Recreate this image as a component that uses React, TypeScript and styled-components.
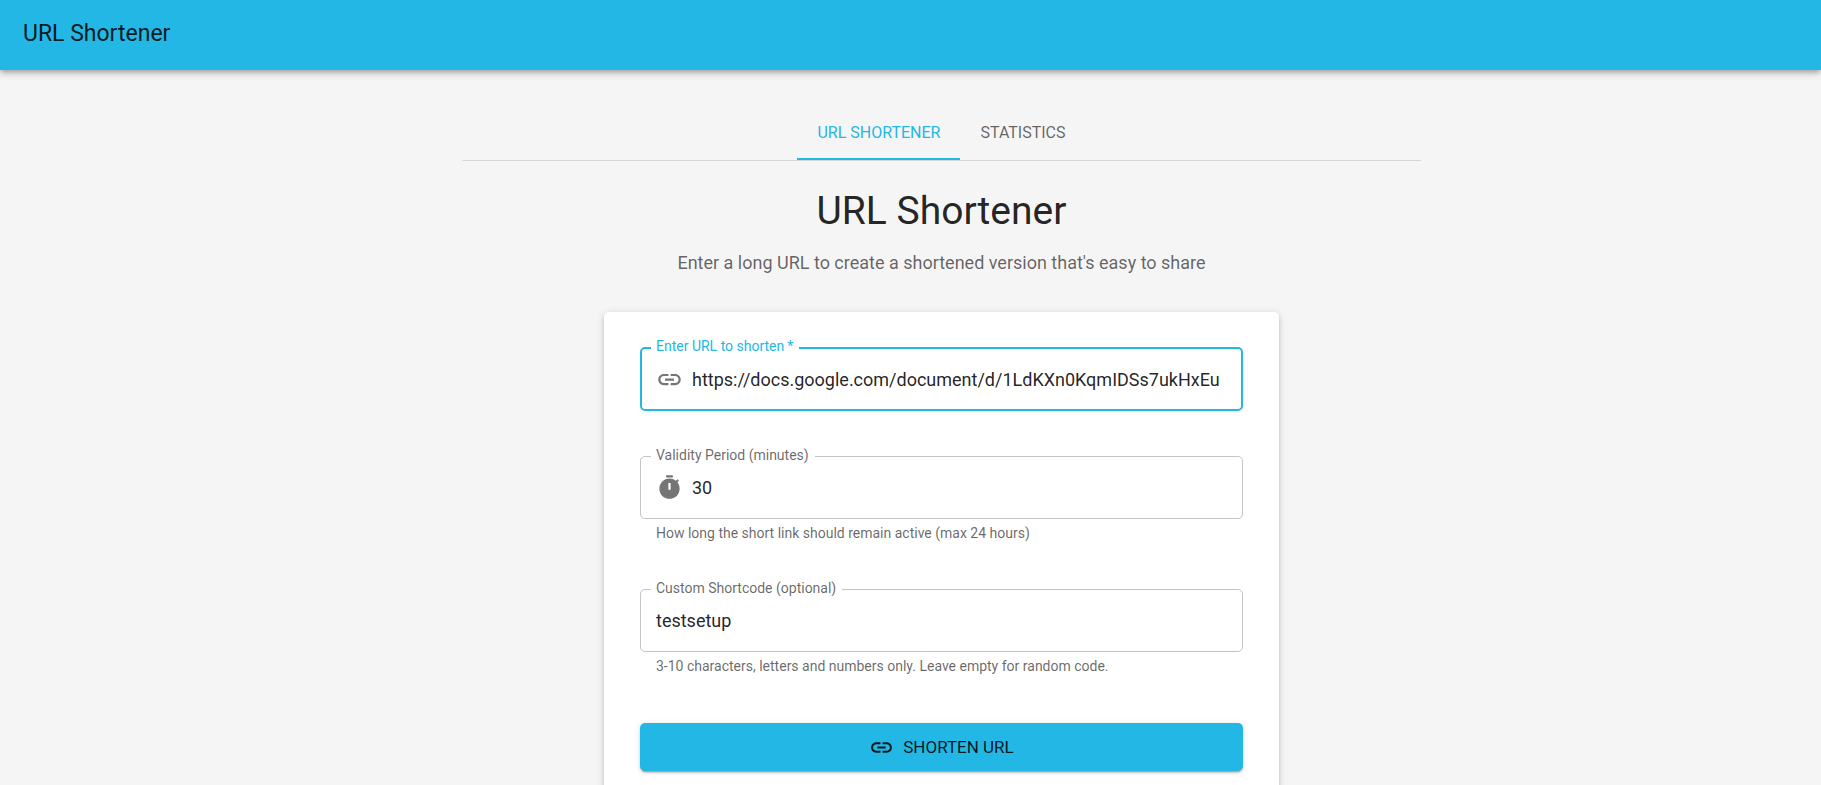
import React, { useState } from "react";
import styled, { createGlobalStyle, css } from "styled-components";

const color = {
  primary: "#23b7e5",
  text: "rgba(0, 0, 0, 0.87)",
  muted: "rgba(0, 0, 0, 0.6)",
  icon: "rgba(0, 0, 0, 0.54)",
  outline: "rgba(0, 0, 0, 0.23)",
  divider: "rgba(0, 0, 0, 0.12)",
};

const GlobalStyle = createGlobalStyle`
  *, *::before, *::after { box-sizing: border-box; }
  html {
    background: #f5f5f5;
    scrollbar-width: none;
  }
  body {
    margin: 0;
    background: #f5f5f5;
    color: ${color.text};
    font-family: Roboto, "Liberation Sans", sans-serif;
    font-size: 18px;
    line-height: 27px;
  }
`;

const AppBar = styled.header`
  position: relative;
  padding: 16px 23px 18px;
  background: ${color.primary};
  box-shadow:
    0 2px 4px -1px rgba(0, 0, 0, 0.2),
    0 4px 6px 0 rgba(0, 0, 0, 0.14),
    0 1px 11px 0 rgba(0, 0, 0, 0.12);
`;

const Brand = styled.div`
  font-size: 23px;
  line-height: 36px;
`;

const Main = styled.main`
  padding: 36px 0 36px 62px;
`;

const Container = styled.div`
  max-width: 959px;
  margin: 0 auto;
`;

const Tabs = styled.nav`
  display: flex;
  justify-content: center;
  border-bottom: 1px solid ${color.divider};
`;

const Tab = styled.button<{ $active: boolean }>`
  height: 54px;
  padding: 2px 20px 0;
  border: 0;
  border-bottom: 2px solid ${(p) => (p.$active ? color.primary : "transparent")};
  background: none;
  color: ${(p) => (p.$active ? color.primary : color.muted)};
  font: inherit;
  font-size: 16px;
  line-height: 20px;
  text-transform: uppercase;
  cursor: pointer;
`;

const Intro = styled.div`
  padding: 27px 0 36px;
  text-align: center;
`;

const Heading = styled.h1`
  margin: 0 0 14px;
  font-size: 39px;
  font-weight: 400;
  line-height: 47px;
`;

const Subtitle = styled.p`
  margin: 0;
  color: ${color.muted};
`;

const Card = styled.form`
  max-width: 675px;
  margin: 0 auto;
  padding: 35px 36px 36px;
  border-radius: 5px;
  background: #fff;
  box-shadow:
    0 3px 3px -2px rgba(0, 0, 0, 0.2),
    0 3px 4px 0 rgba(0, 0, 0, 0.14),
    0 1px 9px 0 rgba(0, 0, 0, 0.12);
`;

const Fields = styled.div`
  display: grid;
  gap: 45px;
  margin-bottom: 46px;
`;

const FieldRoot = styled.div`
  position: relative;
  min-width: 0;
`;

const FieldLabel = styled.label<{ $active: boolean }>`
  position: absolute;
  top: -10px;
  left: 11px;
  padding: 0 6px 0 5px;
  background: #fff;
  color: ${(p) => (p.$active ? color.primary : color.muted)};
  font-size: 14px;
  line-height: 18px;
`;

const InputBox = styled.div<{ $active: boolean }>`
  display: flex;
  align-items: center;
  gap: 9px;
  height: 63px;
  padding: 0 15px;
  border: 1px solid ${color.outline};
  border-radius: 5px;
  ${(p) =>
    p.$active &&
    css`
      height: 64px;
      padding: 0 14px;
      border: 2px solid ${color.primary};
    `}
`;

const Input = styled.input`
  flex: 1;
  min-width: 0;
  height: 27px;
  padding: 0;
  border: 0;
  outline: 0;
  background: none;
  color: inherit;
  font: inherit;
`;

const Helper = styled.p`
  margin: 3px 16px 0;
  color: ${color.muted};
  font-size: 14px;
  line-height: 22px;
`;

const Icon = styled.svg<{ $size: number }>`
  flex: none;
  width: ${(p) => p.$size}px;
  height: ${(p) => p.$size}px;
  fill: currentColor;
`;

const Adornment = styled.span`
  display: flex;
  color: ${color.icon};
`;

const SubmitButton = styled.button`
  display: flex;
  align-items: center;
  justify-content: center;
  gap: 9px;
  width: 100%;
  height: 48px;
  border: 0;
  border-radius: 5px;
  background: ${color.primary};
  color: ${color.text};
  font: inherit;
  font-size: 17px;
  text-transform: uppercase;
  cursor: pointer;
  box-shadow:
    0 3px 1px -2px rgba(0, 0, 0, 0.2),
    0 2px 2px 0 rgba(0, 0, 0, 0.14),
    0 1px 6px 0 rgba(0, 0, 0, 0.12);
`;

const LinkIcon = ({ size }: { size: number }) => (
  <Icon $size={size} viewBox="0 0 24 24" aria-hidden="true">
    <path d="M3.9 12c0-1.71 1.39-3.1 3.1-3.1h4V7H7c-2.76 0-5 2.24-5 5s2.24 5 5 5h4v-1.9H7c-1.71 0-3.1-1.39-3.1-3.1M8 13h8v-2H8zm9-6h-4v1.9h4c1.71 0 3.1 1.39 3.1 3.1s-1.39 3.1-3.1 3.1h-4V17h4c2.76 0 5-2.24 5-5s-2.24-5-5-5" />
  </Icon>
);

const TimerIcon = ({ size }: { size: number }) => (
  <Icon $size={size} viewBox="0 0 24 24" aria-hidden="true">
    <path d="M9 1h6v2H9zm10.03 6.39 1.42-1.42c-.43-.51-.9-.99-1.41-1.41l-1.42 1.42C16.07 4.74 14.12 4 12 4c-4.97 0-9 4.03-9 9s4.02 9 9 9 9-4.03 9-9c0-2.12-.74-4.07-1.97-5.61M13 14h-2V8h2z" />
  </Icon>
);

type FieldProps = {
  id: string;
  label: string;
  value: string;
  onChange: (value: string) => void;
  icon?: React.ReactNode;
  helper?: string;
  active?: boolean;
  required?: boolean;
};

const Field = ({ id, label, value, onChange, icon, helper, active = false, required }: FieldProps) => (
  <FieldRoot>
    <InputBox $active={active}>
      {icon && <Adornment>{icon}</Adornment>}
      <Input
        id={id}
        value={value}
        required={required}
        spellCheck={false}
        aria-describedby={helper ? `${id}-helper` : undefined}
        onChange={(e) => onChange(e.target.value)}
      />
    </InputBox>
    <FieldLabel htmlFor={id} $active={active}>
      {label}
      {required && "\u2009*"}
    </FieldLabel>
    {helper && <Helper id={`${id}-helper`}>{helper}</Helper>}
  </FieldRoot>
);

export default function App() {
  const [tab, setTab] = useState("URL Shortener");
  const [url, setUrl] = useState("https://docs.google.com/document/d/1LdKXn0KqmIDSs7ukHxEu");
  const [minutes, setMinutes] = useState("30");
  const [code, setCode] = useState("testsetup");

  return (
    <>
      <GlobalStyle />
      <AppBar>
        <Brand>URL Shortener</Brand>
      </AppBar>
      <Main>
        <Container>
          <Tabs>
            {["URL Shortener", "Statistics"].map((name) => (
              <Tab key={name} type="button" $active={tab === name} onClick={() => setTab(name)}>
                {name}
              </Tab>
            ))}
          </Tabs>
          <Intro>
            <Heading>URL Shortener</Heading>
            <Subtitle>Enter a long URL to create a shortened version that's easy to share</Subtitle>
          </Intro>
          <Card onSubmit={(e) => e.preventDefault()}>
            <Fields>
              <Field
                id="url"
                label="Enter URL to shorten"
                value={url}
                onChange={setUrl}
                icon={<LinkIcon size={27} />}
                active
                required
              />
              <Field
                id="validity"
                label="Validity Period (minutes)"
                value={minutes}
                onChange={setMinutes}
                icon={<TimerIcon size={27} />}
                helper="How long the short link should remain active (max 24 hours)"
              />
              <Field
                id="shortcode"
                label="Custom Shortcode (optional)"
                value={code}
                onChange={setCode}
                helper="3-10 characters, letters and numbers only. Leave empty for random code."
              />
            </Fields>
            <SubmitButton type="submit">
              <LinkIcon size={25} />
              Shorten URL
            </SubmitButton>
          </Card>
        </Container>
      </Main>
    </>
  );
}
